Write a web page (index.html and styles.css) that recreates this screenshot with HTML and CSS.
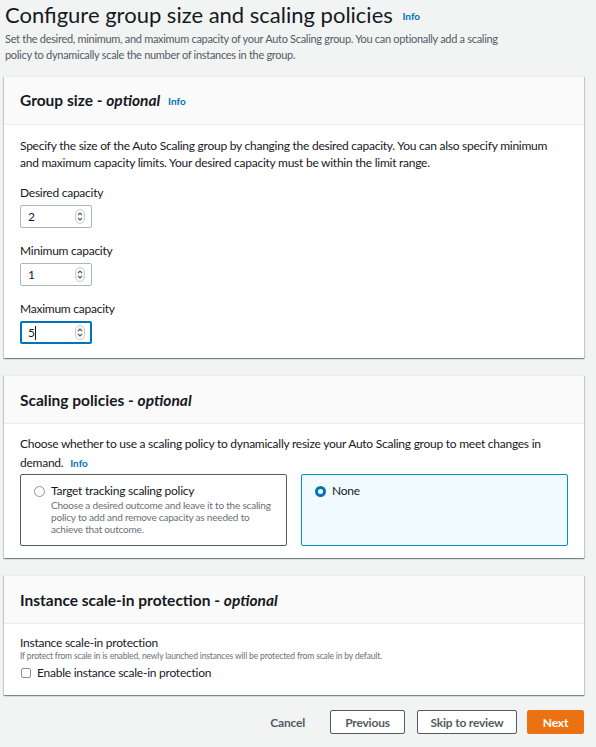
FILE: index.html
```html
<!DOCTYPE html>
<html lang="en">
<head>
<meta charset="utf-8">
<title>Configure group size and scaling policies</title>
<link rel="stylesheet" href="styles.css">
</head>
<body>
<div class="page">
  <header class="page-head">
    <h1>Configure group size and scaling policies <a class="info info-lg">Info</a></h1>
    <p>Set the desired, minimum, and maximum capacity of your Auto Scaling group. You can optionally add a scaling policy to dynamically scale the number of instances in the group.</p>
  </header>

  <section class="card">
    <div class="card-head"><h2>Group size - <em>optional</em> <a class="info">Info</a></h2></div>
    <div class="card-body body-1">
      <p class="text">Specify the size of the Auto Scaling group by changing the desired capacity. You can also specify minimum and maximum capacity limits. Your desired capacity must be within the limit range.</p>
      <div class="field">
        <label>Desired capacity</label>
        <div class="num"><span class="val">2</span><svg class="spin" width="10" height="15" viewBox="0 0 10 15"><rect x="0.5" y="0.5" width="9" height="14" rx="4.5" fill="#fafafa" stroke="#c9cccc"/><path d="M3 6 L5 4 L7 6" fill="none" stroke="#545b64" stroke-width="1.1"/><path d="M3 9 L5 11 L7 9" fill="none" stroke="#545b64" stroke-width="1.1"/></svg></div>
      </div>
      <div class="field">
        <label>Minimum capacity</label>
        <div class="num"><span class="val">1</span><svg class="spin" width="10" height="15" viewBox="0 0 10 15"><rect x="0.5" y="0.5" width="9" height="14" rx="4.5" fill="#fafafa" stroke="#c9cccc"/><path d="M3 6 L5 4 L7 6" fill="none" stroke="#545b64" stroke-width="1.1"/><path d="M3 9 L5 11 L7 9" fill="none" stroke="#545b64" stroke-width="1.1"/></svg></div>
      </div>
      <div class="field">
        <label>Maximum capacity</label>
        <div class="num focus"><span class="val">5<span class="caret"></span></span><svg class="spin" width="10" height="15" viewBox="0 0 10 15"><rect x="0.5" y="0.5" width="9" height="14" rx="4.5" fill="#fafafa" stroke="#c9cccc"/><path d="M3 6 L5 4 L7 6" fill="none" stroke="#545b64" stroke-width="1.1"/><path d="M3 9 L5 11 L7 9" fill="none" stroke="#545b64" stroke-width="1.1"/></svg></div>
      </div>
    </div>
  </section>

  <section class="card">
    <div class="card-head"><h2>Scaling policies - <em>optional</em></h2></div>
    <div class="card-body body-2">
      <p class="text text-loose">Choose whether to use a scaling policy to dynamically resize your Auto Scaling group to meet changes in <span class="nowrap">demand. <a class="info info-inline">Info</a></span></p>
      <div class="tiles">
        <div class="tile">
          <span class="radio"></span>
          <div class="tile-text">
            <div class="tile-title">Target tracking scaling policy</div>
            <div class="tile-desc">Choose a desired outcome and leave it to the scaling policy to add and remove capacity as needed to achieve that outcome.</div>
          </div>
        </div>
        <div class="tile selected">
          <span class="radio on"></span>
          <div class="tile-text">
            <div class="tile-title">None</div>
          </div>
        </div>
      </div>
    </div>
  </section>

  <section class="card">
    <div class="card-head"><h2>Instance scale-in protection - <em>optional</em></h2></div>
    <div class="card-body body-3">
      <div class="sub-label">Instance scale-in protection</div>
      <div class="sub-desc">If protect from scale in is enabled, newly launched instances will be protected from scale in by default.</div>
      <label class="check"><span class="box"></span>Enable instance scale-in protection</label>
    </div>
  </section>

  <div class="actions">
    <button class="btn link">Cancel</button>
    <button class="btn btn-prev">Previous</button>
    <button class="btn btn-skip">Skip to review</button>
    <button class="btn primary">Next</button>
  </div>
</div>
</body>
</html>
```
FILE: styles.css
```css
* { box-sizing: border-box; }
html, body { margin: 0; padding: 0; }
body {
  background: #f2f3f3;
  font-family: Lato, "Liberation Sans", sans-serif;
  color: #16191f;
  width: 596px;
  height: 747px;
  overflow: hidden;
}
.page { padding: 0 12px 0 4px; }
.page-head { padding-left: 1px; }
h1 {
  margin: 0;
  padding-top: 2px;
  font-size: 22px;
  line-height: 26px;
  font-weight: 400;
  color: #16191f;
}
.info {
  color: #0073bb;
  font-weight: 700;
  font-size: 10px;
  letter-spacing: 0;
  text-decoration: none;
  margin-left: 3px;
  vertical-align: 1px;
}
.info-lg { font-size: 10px; vertical-align: 3px; margin-left: 4px; }
.info-inline { vertical-align: baseline; margin-left: 4px; }
.nowrap { white-space: nowrap; }
.page-head p {
  margin: 2px 0 0;
  max-width: 505px;
  font-size: 11px;
  letter-spacing: -0.3px;
  line-height: 16px;
  color: #545b64;
}
.card {
  background: #fff;
  margin-top: 17px;
  box-shadow: 0 1px 1px 0 rgba(0,28,36,.3), 1px 1px 1px 0 rgba(0,28,36,.15), -1px 1px 1px 0 rgba(0,28,36,.15);
  border-top: 1px solid #eaeded;
}
.page-head + .card { margin-top: 13px; }
.card-head {
  background: #fafafa;
  border-bottom: 1px solid #eaeded;
  height: 48px;
  display: flex;
  align-items: center;
  padding: 0 16px;
}
h2 {
  margin: 0;
  font-size: 15.5px;
  font-weight: 700;
  line-height: 18px;
}
h2 em { font-style: italic; }
h2 .info { margin-left: 4px; }
.card-body { padding: 10px 16px 14px; letter-spacing: -0.25px; }
.body-1 { padding-top: 12px; padding-bottom: 14px; }
.body-2 { padding-bottom: 12px; }
.text {
  margin: 0;
  font-size: 12px;
  line-height: 17px;
}
.text-loose { line-height: 19px; }
.field { margin-top: 15px; }
.text + .field { margin-top: 14px; }
.field label {
  display: block;
  font-size: 12px;
  line-height: 16px;
  margin-bottom: 4px;
}
.num {
  width: 72px;
  height: 23px;
  border: 1px solid #aab7b8;
  border-radius: 2px;
  display: flex;
  align-items: center;
  justify-content: space-between;
  padding: 0 6px 0 7px;
  font-size: 12px;
}
.num.focus {
  border: 2px solid #0073bb;
  padding: 0 5px 0 6px;
}
.caret {
  display: inline-block;
  width: 1px;
  height: 14px;
  background: #16191f;
  vertical-align: -3px;
}
.spin { display: block; }
.tiles {
  margin-top: 1px;
  display: grid;
  grid-template-columns: 1fr 1fr;
  gap: 14px;
}
.tile {
  border: 1px solid #545b64;
  border-radius: 2px;
  height: 72px;
  display: flex;
  align-items: flex-start;
  padding: 8px 10px 0 13px;
  gap: 6px;
}
.tile.selected {
  background: #f1faff;
  border-color: #0094c6;
}
.radio {
  flex: none;
  width: 11px;
  height: 11px;
  border: 1px solid #879596;
  border-radius: 50%;
  margin-top: 3px;
  background: #fff;
}
.radio.on {
  border: 3px solid #0073bb;
}
.tile-title { font-size: 12px; line-height: 16px; }
.tile-desc {
  font-size: 10px;
  letter-spacing: -0.2px;
  line-height: 12px;
  color: #687078;
  margin-top: 0;
}
.body-3 { padding: 11px 16px 14px; }
.sub-label { font-size: 12px; line-height: 15px; }
.sub-desc { font-size: 8.5px; letter-spacing: -0.15px; line-height: 12px; color: #687078; }
.check {
  display: flex;
  align-items: center;
  gap: 6px;
  font-size: 12px;
  line-height: 16px;
  margin-top: 3px;
}
.box {
  width: 10px;
  height: 10px;
  border: 1px solid #879596;
  border-radius: 2px;
  background: #fff;
  margin-left: 1px;
}
.actions {
  display: flex;
  justify-content: flex-end;
  align-items: center;
  margin-top: 15px;
}
.btn {
  font-family: inherit;
  font-size: 12px;
  font-weight: 700;
  letter-spacing: -0.2px;
  height: 24px;
  padding: 0;
  border: 1px solid #545b64;
  border-radius: 2px;
  background: #fff;
  color: #545b64;
}
.btn.link { border-color: transparent; background: transparent; padding: 0 12px; margin-right: 12px; }
.btn-prev { width: 75px; margin-right: 12px; }
.btn-skip { width: 100px; margin-right: 10px; }
.btn.primary { background: #ec7211; border-color: #ec7211; color: #fff; width: 57px; }
```
